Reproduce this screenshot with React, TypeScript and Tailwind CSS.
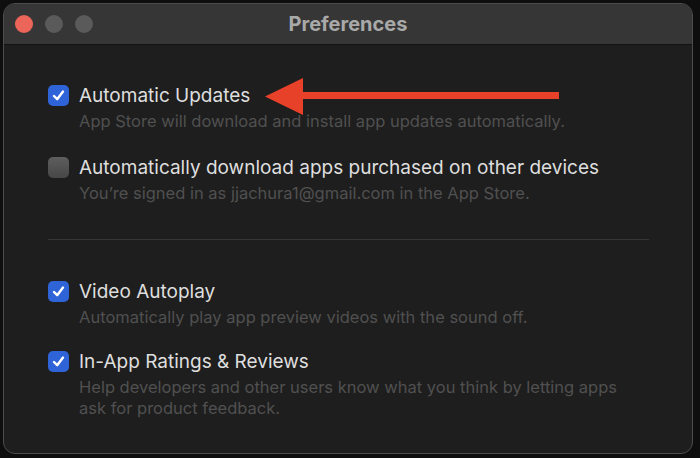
import React from "react";

const font = { fontFamily: "Inter, 'Noto Sans', sans-serif" };

function Check({ on }: { on: boolean }) {
  if (on) {
    return (
      <div className="mt-[3px] flex h-[21px] w-[21px] shrink-0 items-center justify-center rounded-[5px] bg-[#2f64d8]">
        <svg width="15" height="15" viewBox="0 0 15 15">
          <path d="M3 8 L6.2 11.2 L12 3.6" fill="none" stroke="white" strokeWidth="2.4" strokeLinecap="round" strokeLinejoin="round" />
        </svg>
      </div>
    );
  }
  return <div className="mt-[3px] h-[21px] w-[21px] shrink-0 rounded-[5px] bg-gradient-to-b from-[#5e5e5e] to-[#474747]" />;
}

function Item({ on, label, desc, className }: { on: boolean; label: string; desc: React.ReactNode; className?: string }) {
  return (
    <div className={"flex gap-[10px] " + (className ?? "")}>
      <Check on={on} />
      <div className="flex flex-col">
        <div className="h-[28px] text-[19px] leading-[28px] text-[#dedede]">{label}</div>
        <div className="mt-[1px] text-[16.5px] leading-[21px] text-[#505050]">{desc}</div>
      </div>
    </div>
  );
}

export default function App() {
  return (
    <div className="relative h-[458px] w-[700px] overflow-hidden bg-[#0e0e0e] pl-[3px] pt-[3px]" style={font}>
      <div className="flex h-[451px] w-[690px] flex-col overflow-hidden rounded-[12px] border border-[#4c4c4c] bg-[#1e1e1e]">
        <div className="relative flex h-[41px] shrink-0 items-center border-b border-[#121212] bg-[#363636] pl-[11px]">
          <div className="flex gap-[12px]">
            <div className="h-[18px] w-[18px] rounded-full bg-[#ec6559]" />
            <div className="h-[18px] w-[18px] rounded-full bg-[#5a5a5a]" />
            <div className="h-[18px] w-[18px] rounded-full bg-[#5a5a5a]" />
          </div>
          <div className="absolute inset-0 flex items-center justify-center text-[20px] font-bold text-[#a9a9a9]">Preferences</div>
        </div>
        <div className="flex flex-col pl-[44px] pr-[43px] pt-[37px]">
          <Item on label="Automatic Updates" desc="App Store will download and install app updates automatically." />
          <Item
            on={false}
            className="mt-[22px]"
            label="Automatically download apps purchased on other devices"
            desc="You’re signed in as jjachura1@gmail.com in the App Store."
          />
          <div className="mt-[35px] h-px bg-[#363636]" />
          <Item on className="mt-[38px]" label="Video Autoplay" desc="Automatically play app preview videos with the sound off." />
          <Item
            on
            className="mt-[20px]"
            label="In-App Ratings & Reviews"
            desc={
              <>
                Help developers and other users know what you think by letting apps
                <br />
                ask for product feedback.
              </>
            }
          />
        </div>
      </div>
      <svg className="pointer-events-none absolute left-0 top-0" width="700" height="458">
        <polygon points="265,96.5 303,78 303,115" fill="#e8412a" />
        <rect x="300" y="92" width="259" height="7" fill="#e8412a" />
      </svg>
    </div>
  );
}
